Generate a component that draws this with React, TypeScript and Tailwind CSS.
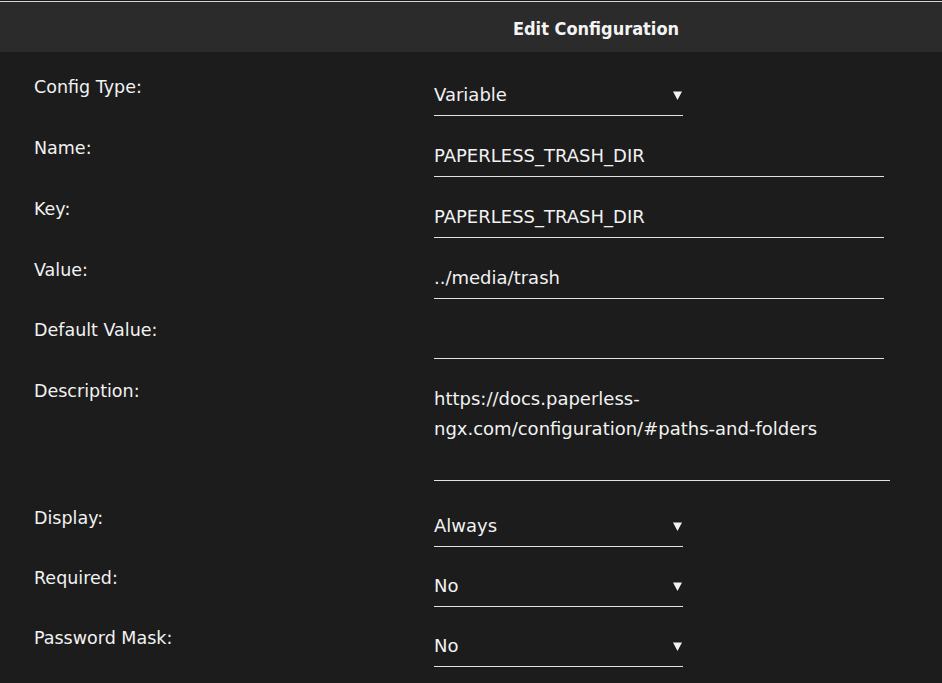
import React from "react";

const font = { fontFamily: '"DejaVu Sans", Verdana, sans-serif' };

function Arrow() {
  return (
    <svg width="9" height="9" viewBox="0 0 9 9" className="block">
      <polygon points="0,0.5 9,0.5 4.5,9" fill="#f2f2f2" />
    </svg>
  );
}

function Label({ children }: { children: React.ReactNode }) {
  return (
    <div className="w-[434px] shrink-0 pl-[34px] text-[17.5px] leading-[24px] text-[#f2f2f2]">
      {children}
    </div>
  );
}

function SelectField({ value }: { value: string }) {
  return (
    <div className="w-[249px] border-b border-[#e2e2e2] pt-[8px] pb-[8px] flex items-center justify-between pr-[1px]">
      <span className="text-[18px] leading-[24px] text-[#f2f2f2]">{value}</span>
      <Arrow />
    </div>
  );
}

function TextField({ value }: { value: string }) {
  return (
    <div className="w-[450px] border-b border-[#e2e2e2] pt-[8px] pb-[8px] h-[41px]">
      <span className="text-[18px] leading-[24px] text-[#f2f2f2] block">{value}</span>
    </div>
  );
}

function Row({ label, children, className = "" }: { label: string; children: React.ReactNode; className?: string }) {
  return (
    <div className={`flex ${className}`}>
      <Label>{label}</Label>
      {children}
    </div>
  );
}

export default function App() {
  return (
    <div className="w-[942px] h-[683px] bg-[#1c1c1c] overflow-hidden" style={font}>
      <div className="h-[1px] bg-[#1c1c1c]" />
      <div className="h-[1px] bg-[#d6d6d6]" />
      <div
        className="h-[50px] bg-[#2b2b2b] flex justify-center pl-[250px] pt-[4px] text-[18px] leading-[46px] font-bold text-[#f4f4f4]"
        style={{ fontFamily: '"DejaVu Sans Condensed", "DejaVu Sans", sans-serif', fontStretch: "condensed" }}
      >
        Edit Configuration
      </div>
      <div className="pt-[23px] flex flex-col">
        <Row label="Config Type:" className="mb-[20px]">
          <SelectField value="Variable" />
        </Row>
        <Row label="Name:" className="mb-[20px]">
          <TextField value="PAPERLESS_TRASH_DIR" />
        </Row>
        <Row label="Key:" className="mb-[20px]">
          <TextField value="PAPERLESS_TRASH_DIR" />
        </Row>
        <Row label="Value:" className="mb-[19px]">
          <TextField value="../media/trash" />
        </Row>
        <Row label="Default Value:" className="mb-[20px]">
          <TextField value="" />
        </Row>
        <Row label="Description:" className="mb-[25px]">
          <div className="w-[456px] border-b border-[#e2e2e2] pt-[5px] pb-[6px]">
            <div className="h-[90px] text-[18px] leading-[30px] text-[#f2f2f2]">
              https://docs.paperless-
              <br />
              ngx.com/configuration/#paths-and-folders
            </div>
          </div>
        </Row>
        <Row label="Display:" className="mb-[19px]">
          <SelectField value="Always" />
        </Row>
        <Row label="Required:" className="mb-[19px]">
          <SelectField value="No" />
        </Row>
        <Row label="Password Mask:">
          <SelectField value="No" />
        </Row>
      </div>
    </div>
  );
}
